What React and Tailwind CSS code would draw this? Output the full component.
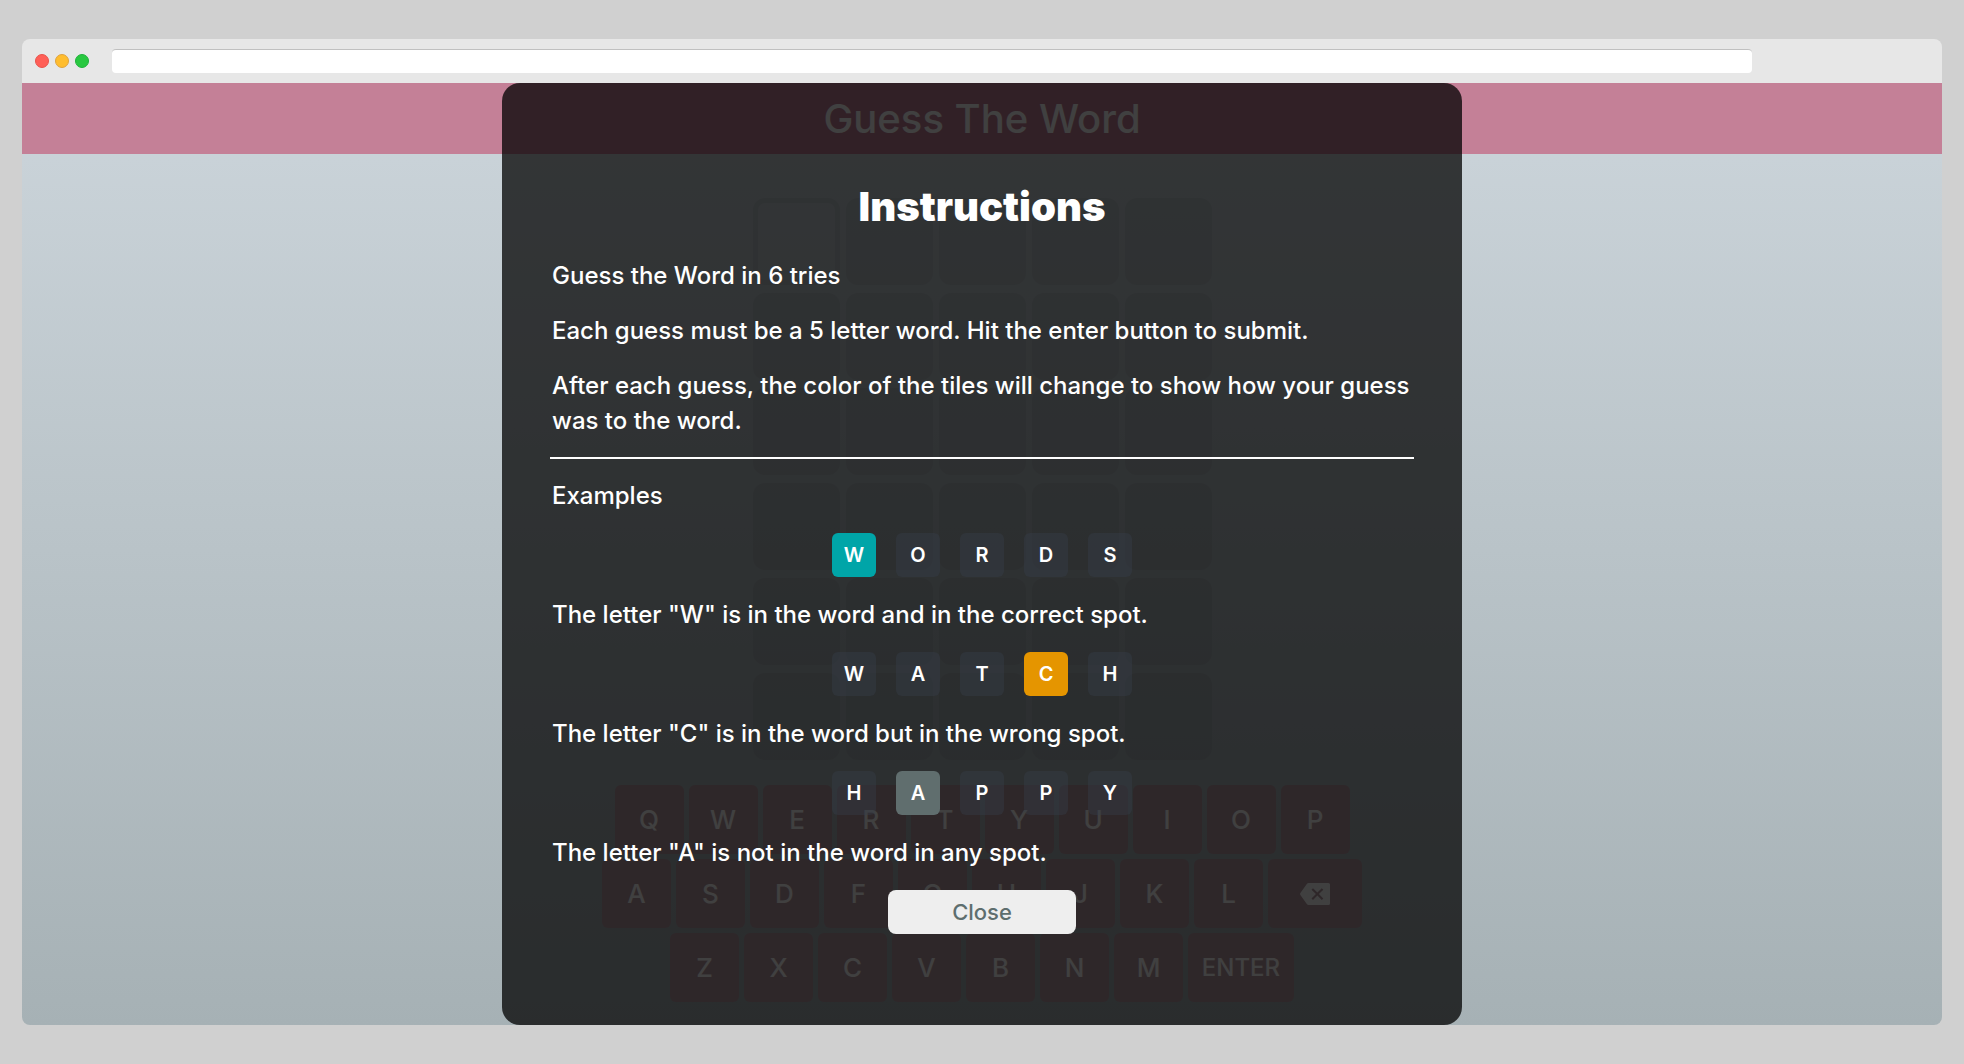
const BOARD_ROWS = 6;
const BOARD_COLUMNS = 5;

const KEY_ROWS = [
  ["Q", "W", "E", "R", "T", "Y", "U", "I", "O", "P"],
  ["A", "S", "D", "F", "G", "H", "J", "K", "L", "BACKSPACE"],
  ["Z", "X", "C", "V", "B", "N", "M", "ENTER"],
];

const EXAMPLES = [
  { word: "WORDS", index: 0, color: "bg-[#00a5a8]", note: 'The letter "W" is in the word and in the correct spot.' },
  { word: "WATCH", index: 3, color: "bg-[#e59500]", note: 'The letter "C" is in the word but in the wrong spot.' },
  { word: "HAPPY", index: 1, color: "bg-[#606e6e]", note: 'The letter "A" is not in the word in any spot.' },
];

function BackspaceIcon() {
  return (
    <svg viewBox="0 0 30 22" className="h-[22px] w-[30px]" aria-hidden="true">
      <path
        fill="currentColor"
        fillRule="evenodd"
        d="M8.6 0H28.4Q30 0 30 1.6V20.4Q30 22 28.4 22H8.6Q7.5 22 6.8 21L.4 12Q-.2 11 .4 10L6.8 1Q7.5 0 8.6 0ZM13 5.2 11.5 6.7 15.9 11 11.5 15.4 13 16.9 17.4 12.5 21.8 16.9 23.3 15.4 18.9 11 23.3 6.7 21.8 5.2 17.4 9.6Z"
      />
    </svg>
  );
}

const KEY_STYLES = {
  BACKSPACE: "w-[94px]",
  ENTER: "w-[106px] text-2xl",
};

function Key({ value }) {
  return (
    <button
      type="button"
      aria-label={value}
      className={`flex h-[69px] items-center justify-center rounded-md bg-[#b89ba4] font-medium text-white ${KEY_STYLES[value] ?? "w-[69px] text-[26px]"}`}
    >
      {value === "BACKSPACE" ? <BackspaceIcon /> : value}
    </button>
  );
}

function Game() {
  return (
    <div className="flex flex-1 flex-col bg-linear-to-b from-[#ccd5db] to-[#a6b1b5]">
      <header className="flex h-[71px] items-center justify-center bg-[#c48097]">
        <h1 className="text-[40px] font-medium text-white">Guess The Word</h1>
      </header>
      <div className="flex flex-col items-center gap-2 pt-11">
        {Array.from({ length: BOARD_ROWS }, (_, row) => (
          <div key={row} className="flex gap-[6px]">
            {Array.from({ length: BOARD_COLUMNS }, (_, column) => (
              <div
                key={column}
                className={`size-[87px] rounded-xl ${row === 0 && column === 0 ? "border-[5px] border-black/5" : "bg-black/5"}`}
              />
            ))}
          </div>
        ))}
      </div>
      <div className="mt-auto flex flex-col items-center gap-[5px] pb-[23px]">
        {KEY_ROWS.map((row, index) => (
          <div key={index} className="flex gap-[5px]">
            {row.map((value) => (
              <Key key={value} value={value} />
            ))}
          </div>
        ))}
      </div>
    </div>
  );
}

function ExampleWord({ word, index, color }) {
  return (
    <div className="flex justify-center gap-5">
      {word.split("").map((letter, position) => (
        <span
          key={position}
          className={`flex size-11 items-center justify-center rounded-md text-xl font-semibold ${position === index ? color : "bg-[#363e4a]/40"}`}
        >
          {letter}
        </span>
      ))}
    </div>
  );
}

function Instructions() {
  return (
    <section
      role="dialog"
      aria-labelledby="instructions-title"
      className="absolute inset-y-0 left-1/4 w-1/2 rounded-[18px] bg-black/75 px-12 pt-[99px] text-2xl leading-[35px] font-medium text-white"
    >
      <h2 id="instructions-title" className="mb-[27px] text-center text-[40px] leading-[49px] font-black">
        Instructions
      </h2>
      <div className="flex flex-col gap-5 px-[2px]">
        <p>Guess the Word in 6 tries</p>
        <p>Each guess must be a 5 letter word. Hit the enter button to submit.</p>
        <p>After each guess, the color of the tiles will change to show how your guess was to the word.</p>
      </div>
      <hr className="my-[19px] border-t-2 border-white" />
      <div className="flex flex-col gap-5 px-[2px]">
        <p>Examples</p>
        {EXAMPLES.map((example) => (
          <div key={example.word} className="flex flex-col gap-5">
            <ExampleWord {...example} />
            <p>{example.note}</p>
          </div>
        ))}
        <button
          type="button"
          className="mx-auto h-11 w-[188px] rounded-lg bg-[#eee] text-[22px] font-medium text-[#5e6e6e]"
        >
          Close
        </button>
      </div>
    </section>
  );
}

export default function App() {
  return (
    <main className="flex min-h-screen flex-col bg-[#d0d0d0] px-[22px] py-[39px] font-['Inter',sans-serif]">
      <div className="flex flex-1 flex-col overflow-hidden rounded-lg">
        <div className="flex h-11 items-center bg-[#e7e7e7] pl-[13px]">
          <div className="flex gap-[6px]">
            <span className="size-[14px] rounded-full border border-[#e8534b] bg-[#ff5f57]" />
            <span className="size-[14px] rounded-full border border-[#dfa33c] bg-[#ffbd2e]" />
            <span className="size-[14px] rounded-full border border-[#1fb23a] bg-[#28c840]" />
          </div>
          <input
            type="text"
            aria-label="Address"
            className="ml-[23px] h-6 w-[86%] rounded border-t border-[#c0c0c0] bg-white px-2 outline-none"
          />
        </div>
        <div className="relative flex flex-1 flex-col">
          <Game />
          <Instructions />
        </div>
      </div>
    </main>
  );
}
